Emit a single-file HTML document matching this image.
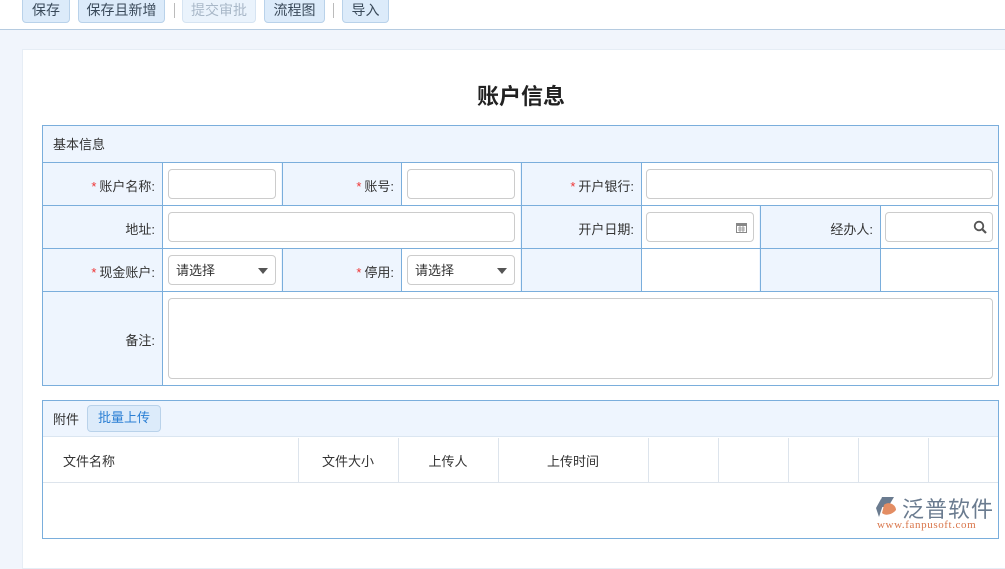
<!DOCTYPE html>
<html><head><meta charset="utf-8"><style>
*{box-sizing:border-box;margin:0;padding:0}
body{width:1005px;height:542px;overflow:hidden;background:#f1f5fc;font-family:"Liberation Sans","Noto Sans CJK SC",sans-serif;font-size:13px;color:#333;position:relative}
.tb{position:absolute;left:0;top:0;width:1005px;height:30px;background:#fff;border-bottom:1px solid #b5cbe0}
.btn{position:absolute;top:-4px;height:27px;background:#dcebfa;border:1px solid #b9d2ea;border-radius:4px;font-size:14px;color:#3a4a5a;text-align:center;line-height:27px}
.btn.dis{background:#eaf3fc;color:#a9b8c8;border-color:#d6e4f2}
.sep{position:absolute;top:3px;width:1px;height:15px;background:#bbb}
.card{position:absolute;left:22px;top:49px;width:990px;height:520px;background:#fff;border:1px solid #e6edf5}
h1{position:absolute;left:0;width:1042px;top:79px;text-align:center;font-size:22px;font-weight:bold;color:#222}
.lab{position:absolute;text-align:right;padding-right:7px;font-size:13px;color:#333}
.v{position:absolute;background:#fff}
.in{position:absolute;border:1px solid #ccc;border-radius:4px;background:#fff}
.star{color:#e33;margin-right:3px}
.hl{position:absolute;background:#7aaedc}
.gl{position:absolute;background:#dde4ec}
</style></head><body>
<div class="tb">
<div class="btn" style="left:22px;width:48px">保存</div>
<div class="btn" style="left:78px;width:87px">保存且新增</div>
<div class="sep" style="left:174px"></div>
<div class="btn dis" style="left:182px;width:74px">提交审批</div>
<div class="btn" style="left:264px;width:61px">流程图</div>
<div class="sep" style="left:333px"></div>
<div class="btn" style="left:342px;width:47px">导入</div>
</div>
<div class="card"></div>
<h1>账户信息</h1>

<div style="position:absolute;left:42px;top:125px;width:957px;height:261px;background:#eef5fe;border:1px solid #7aaedc"></div>
<div style="position:absolute;left:53px;top:134px;font-size:13px">基本信息</div>
<div class="v" style="left:163px;top:163px;width:118px;height:42px"></div>
<div class="v" style="left:402px;top:163px;width:118px;height:42px"></div>
<div class="v" style="left:642px;top:163px;width:356px;height:42px"></div>
<div class="v" style="left:163px;top:206px;width:357px;height:42px"></div>
<div class="v" style="left:642px;top:206px;width:117px;height:42px"></div>
<div class="v" style="left:881px;top:206px;width:117px;height:42px"></div>
<div class="v" style="left:163px;top:249px;width:118px;height:42px"></div>
<div class="v" style="left:402px;top:249px;width:118px;height:42px"></div>
<div class="v" style="left:642px;top:249px;width:117px;height:42px"></div>
<div class="v" style="left:881px;top:249px;width:117px;height:42px"></div>
<div class="v" style="left:163px;top:292px;width:835px;height:93px"></div>
<div class="hl" style="left:42px;top:162px;width:957px;height:1px"></div>
<div class="hl" style="left:42px;top:205px;width:957px;height:1px"></div>
<div class="hl" style="left:42px;top:248px;width:957px;height:1px"></div>
<div class="hl" style="left:42px;top:291px;width:957px;height:1px"></div>
<div class="hl" style="left:162px;top:162px;width:1px;height:223px"></div>
<div class="hl" style="left:282px;top:162px;width:1px;height:43px"></div>
<div class="hl" style="left:282px;top:248px;width:1px;height:43px"></div>
<div class="hl" style="left:401px;top:162px;width:1px;height:43px"></div>
<div class="hl" style="left:401px;top:248px;width:1px;height:43px"></div>
<div class="hl" style="left:521px;top:162px;width:1px;height:129px"></div>
<div class="hl" style="left:641px;top:162px;width:1px;height:129px"></div>
<div class="hl" style="left:760px;top:205px;width:1px;height:86px"></div>
<div class="hl" style="left:880px;top:205px;width:1px;height:86px"></div>
<div class="lab" style="left:43px;top:176px;width:119px"><span class="star">*</span>账户名称:</div>
<div class="lab" style="left:283px;top:176px;width:118px"><span class="star">*</span>账号:</div>
<div class="lab" style="left:522px;top:176px;width:119px"><span class="star">*</span>开户银行:</div>
<div class="lab" style="left:43px;top:219px;width:119px">地址:</div>
<div class="lab" style="left:522px;top:219px;width:119px">开户日期:</div>
<div class="lab" style="left:761px;top:219px;width:119px">经办人:</div>
<div class="lab" style="left:43px;top:262px;width:119px"><span class="star">*</span>现金账户:</div>
<div class="lab" style="left:283px;top:262px;width:118px"><span class="star">*</span>停用:</div>
<div class="lab" style="left:43px;top:330px;width:119px">备注:</div>
<div class="in" style="left:168px;top:169px;width:108px;height:30px"></div>
<div class="in" style="left:407px;top:169px;width:108px;height:30px"></div>
<div class="in" style="left:646px;top:169px;width:347px;height:30px"></div>
<div class="in" style="left:168px;top:212px;width:347px;height:30px"></div>
<div class="in" style="left:646px;top:212px;width:108px;height:30px"><svg style="position:absolute;right:6px;top:9px" width="11" height="11" viewBox="0 0 11 11"><rect x="0.5" y="1.5" width="10" height="9" fill="none" stroke="#888"/><rect x="0" y="1" width="11" height="3" fill="#888"/><path d="M2 6h7M2 8h7M4 4v6M7 4v6" stroke="#888" stroke-width=".8"/></svg></div>
<div class="in" style="left:885px;top:212px;width:108px;height:30px"><svg style="position:absolute;right:5px;top:7px" width="14" height="14" viewBox="0 0 14 14"><circle cx="6" cy="6" r="4.3" fill="none" stroke="#555" stroke-width="1.8"/><path d="M9 9l4 4" stroke="#555" stroke-width="2.2"/></svg></div>
<div class="in" style="left:168px;top:255px;width:108px;height:30px;padding:4px 7px;font-size:13px">请选择<span style="position:absolute;right:7px;top:12px;border:5px solid transparent;border-top:6px solid #555;border-bottom:0"></span></div>
<div class="in" style="left:407px;top:255px;width:108px;height:30px;padding:4px 7px;font-size:13px">请选择<span style="position:absolute;right:7px;top:12px;border:5px solid transparent;border-top:6px solid #555;border-bottom:0"></span></div>
<div class="in" style="left:168px;top:298px;width:825px;height:81px"></div>

<div style="position:absolute;left:42px;top:400px;width:957px;height:139px;background:#fff;border:1px solid #7aaedc"></div>
<div style="position:absolute;left:43px;top:401px;width:955px;height:36px;background:#eef5fe;border-bottom:1px solid #dbe6f1"></div>
<div style="position:absolute;left:53px;top:409px">附件</div>
<div style="position:absolute;left:87px;top:405px;width:74px;height:27px;background:#dcebfa;border:1px solid #b9d2ea;border-radius:4px;color:#2a7fd4;text-align:center;line-height:24px">批量上传</div>
<div class="gl" style="left:43px;top:482px;width:955px;height:1px"></div>
<div class="gl" style="left:298px;top:438px;width:1px;height:44px"></div>
<div class="gl" style="left:398px;top:438px;width:1px;height:44px"></div>
<div class="gl" style="left:498px;top:438px;width:1px;height:44px"></div>
<div class="gl" style="left:648px;top:438px;width:1px;height:44px"></div>
<div class="gl" style="left:718px;top:438px;width:1px;height:44px"></div>
<div class="gl" style="left:788px;top:438px;width:1px;height:44px"></div>
<div class="gl" style="left:858px;top:438px;width:1px;height:44px"></div>
<div class="gl" style="left:928px;top:438px;width:1px;height:44px"></div>
<div style="position:absolute;left:63px;top:451px">文件名称</div>
<div style="position:absolute;left:298px;width:100px;top:451px;text-align:center">文件大小</div>
<div style="position:absolute;left:398px;width:100px;top:451px;text-align:center">上传人</div>
<div style="position:absolute;left:498px;width:150px;top:451px;text-align:center">上传时间</div>
<svg style="position:absolute;left:874px;top:496px" width="26" height="22" viewBox="0 0 26 22"><path d="M8 1h12l-6 10H4z" fill="#6a7b8f"/><path d="M2 12l5-9 2 6-4 12z" fill="#6a7b8f"/><path d="M10 9c4-4 12-1 12 5-4 5-11 6-14 3z" fill="#e38d63"/></svg>
<div style="position:absolute;left:902px;top:492px;font-size:22px;color:#6a7b8f;letter-spacing:1px">泛普软件</div>
<div style="position:absolute;left:877px;top:519px;font-family:'Liberation Serif',serif;font-size:11px;color:#d9754a;letter-spacing:.6px">www.fanpusoft.com</div>
</body></html>
